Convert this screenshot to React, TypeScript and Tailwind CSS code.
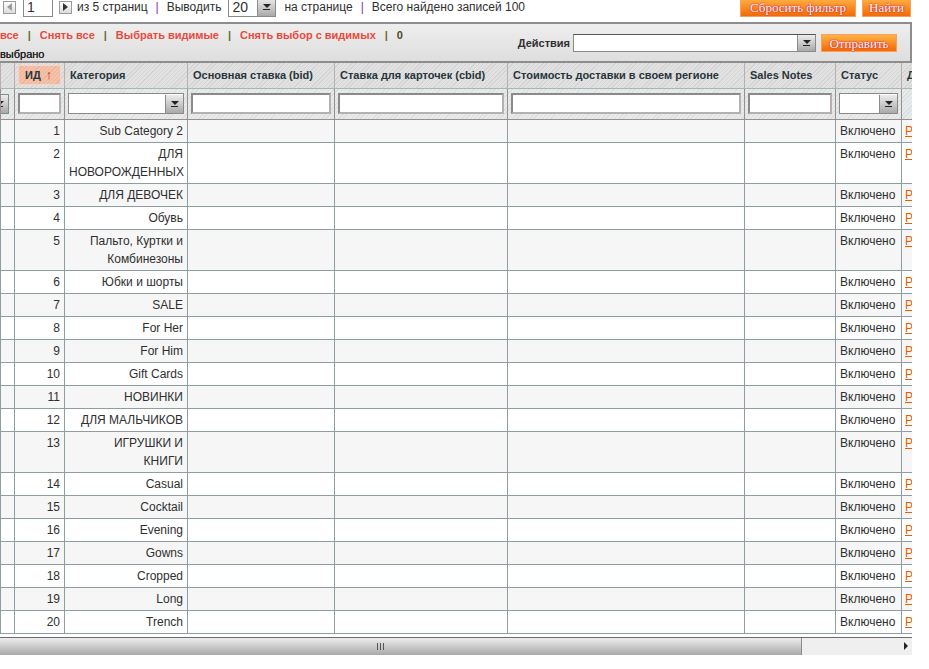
import React from "react";

const rows: [number, React.ReactNode, boolean][] = [
  [1, "Sub Category 2", false],
  [2, <>ДЛЯ<br />НОВОРОЖДЕННЫХ</>, true],
  [3, "ДЛЯ ДЕВОЧЕК", false],
  [4, "Обувь", false],
  [5, <>Пальто, Куртки и<br />Комбинезоны</>, true],
  [6, "Юбки и шорты", false],
  [7, "SALE", false],
  [8, "For Her", false],
  [9, "For Him", false],
  [10, "Gift Cards", false],
  [11, "НОВИНКИ", false],
  [12, "ДЛЯ МАЛЬЧИКОВ", false],
  [13, <>ИГРУШКИ И<br />КНИГИ</>, true],
  [14, "Casual", false],
  [15, "Cocktail", false],
  [16, "Evening", false],
  [17, "Gowns", false],
  [18, "Cropped", false],
  [19, "Long", false],
  [20, "Trench", false],
];

const cols = [14, 50, 123, 147, 173, 237, 91, 66, 12];

function Arrow({ h = "h-[18px]" }: { h?: string }) {
  return (
    <span className={`flex ${h} w-[18px] shrink-0 items-center justify-center border-l border-[#8c8c8c] bg-[linear-gradient(#ececec,#a9a9a9)]`}>
      <span className="flex flex-col items-center gap-[1px]">
        <span className="h-0 w-0 border-x-[4px] border-t-[4px] border-x-transparent border-t-[#222]" />
        <span className="h-[1px] w-[7px] bg-[#222]" />
      </span>
    </span>
  );
}

function OrangeButton({ children, w, h = "h-[18px]" }: { children: React.ReactNode; w: string; h?: string }) {
  return (
    <span className={`flex ${h} ${w} items-center justify-center border border-[#f5a060] bg-[linear-gradient(#ffb347,#f26a06)] font-['Liberation_Serif',serif] text-[13px] leading-none text-white [text-shadow:0_0_2px_#d0123a,0_0_1px_#d0123a]`}>
      {children}
    </span>
  );
}

function PagerBox({ dir }: { dir: "l" | "r" }) {
  return (
    <span className="flex h-[13px] w-[13px] items-center justify-center border border-[#9a9a9a] bg-[linear-gradient(#ffffff,#dcdcdc)]">
      {dir === "l" ? (
        <span className="h-0 w-0 border-y-[4px] border-r-[5px] border-y-transparent border-r-[#9c9c9c]" />
      ) : (
        <span className="h-0 w-0 border-y-[4px] border-l-[5px] border-y-transparent border-l-[#333]" />
      )}
    </span>
  );
}

const headers = [
  "",
  "ИД",
  "Категория",
  "Основная ставка (bid)",
  "Ставка для карточек (cbid)",
  "Стоимость доставки в своем регионе",
  "Sales Notes",
  "Статус",
  "Действие",
];

export default function App() {
  return (
    <div className="h-[669px] w-[929px] overflow-hidden bg-white font-['Liberation_Sans',Arial,sans-serif] text-[#2f2f2f]">
      {/* pager (top is scrolled out of view) */}
      <div className="h-[22px] w-[912px] overflow-hidden">
        <div className="-mt-[3px] flex items-start">
          <div className="flex h-[20px] items-center pl-[3px] text-[12px]">
            <PagerBox dir="l" />
            <span className="ml-[7px] flex h-[20px] w-[30px] items-center border border-[#8a8a8a] border-t-[#555] bg-white pl-[3px] text-[14px]">1</span>
            <span className="ml-[6px]"><PagerBox dir="r" /></span>
            <span className="ml-[5px]">из 5 страниц</span>
            <span className="mx-[8px] text-[#7a3c8c]">|</span>
            <span>Выводить</span>
            <span className="ml-[7px] flex h-[20px] w-[48px] items-center border border-[#8a8a8a] border-t-[#555] bg-white text-[14px]">
              <span className="flex-1 pl-[3px]">20</span>
              <Arrow h="h-[18px]" />
            </span>
            <span className="ml-[8px]">на странице</span>
            <span className="mx-[8px] text-[#7a3c8c]">|</span>
            <span>Всего найдено записей 100</span>
          </div>
          <div className="ml-auto flex gap-[6px] pr-[1px]">
            <OrangeButton w="w-[116px]" h="h-[20px]">Сбросить фильтр</OrangeButton>
            <OrangeButton w="w-[49px]" h="h-[20px]">Найти</OrangeButton>
          </div>
        </div>
      </div>

      {/* massaction */}
      <div className="flex h-[41px] w-[912px] border-y-2 border-r-2 border-y-[#8d8d8d] border-r-[#8d8d8d] bg-[linear-gradient(#eeeeee,#dedede)]">
        <div className="flex flex-col pt-[3px] text-[11px] font-bold">
          <div className="flex items-center">
            <span className="text-[#e84a3c]">все</span>
            <span className="mx-[9px] text-[#6a6a2a]">|</span>
            <span className="text-[#e84a3c]">Снять все</span>
            <span className="mx-[9px] text-[#6a6a2a]">|</span>
            <span className="text-[#e84a3c]">Выбрать видимые</span>
            <span className="mx-[9px] text-[#6a6a2a]">|</span>
            <span className="text-[#e84a3c]">Снять выбор с видимых</span>
            <span className="mx-[9px] text-[#6a6a2a]">|</span>
            <span className="text-[#4a4a1a]">0</span>
          </div>
          <span className="mt-[2px] text-[11px] font-normal text-[#222] [text-shadow:0_0_0.4px_#222]">выбрано</span>
        </div>
        <div className="ml-auto flex items-center pr-[13px] pt-[1px]">
          <span className="mr-[3px] text-[11px] font-bold">Действия</span>
          <span className="flex h-[18px] w-[243px] items-center border border-[#8a8a8a] border-t-[#555] bg-white">
            <span className="flex-1" />
            <Arrow h="h-[16px]" />
          </span>
          <span className="ml-[5px]">
            <OrangeButton w="w-[76px]">Отправить</OrangeButton>
          </span>
        </div>
      </div>

      {/* grid */}
      <div className="w-[912px] overflow-hidden">
        <table className="w-[913px] table-fixed border-collapse text-[12px] leading-[18px]">
          <colgroup>
            {cols.map((w, i) => (
              <col key={i} style={{ width: w }} />
            ))}
          </colgroup>
          <thead>
            <tr className="h-[25px] bg-[image:repeating-linear-gradient(135deg,#e2e2e2_0px,#e2e2e2_2px,#d4d4d4_2px,#d4d4d4_3px)]">
              {headers.map((h, i) => (
                <th key={i} className="overflow-hidden whitespace-nowrap border-x border-[#b8b0b0] p-0 text-left text-[11px] font-bold text-[#27343a]">
                  {i === 1 ? (
                    <span className="mx-[3px] flex h-[20px] items-center border border-[#f7d4c4] bg-[image:repeating-linear-gradient(135deg,#f5c1a9_0px,#f5c1a9_2px,#eab39a_2px,#eab39a_3px)] pl-[6px]">
                      ИД <span className="ml-[5px] text-[13px] font-normal text-[#e8000f]">↑</span>
                    </span>
                  ) : (
                    <span className="pl-[5px]">{h}</span>
                  )}
                </th>
              ))}
            </tr>
            <tr className="h-[31px] bg-[image:repeating-linear-gradient(135deg,#e6ebeb_0px,#e6ebeb_2px,#d9e0e0_2px,#d9e0e0_3px)]">
              {cols.map((_, i) => (
                <th key={i} className="overflow-hidden border border-[#9e8c8c] border-t-[#a9b4b4] p-0 font-normal">
                  {i === 0 && (
                    <div className="flex justify-end pr-[5px]">
                      <span className="flex h-[20px] w-[9px] items-center justify-end overflow-hidden border-y border-r border-[#8a8a8a]">
                        <Arrow />
                      </span>
                    </div>
                  )}
                  {(i === 1 || i === 3 || i === 4 || i === 5 || i === 6) && (
                    <div className="px-[3px]">
                      <div className="h-[21px] border-2 border-[#8f8888] border-b-[#b8b0b0] border-r-[#b8b0b0] bg-white" />
                    </div>
                  )}
                  {(i === 2 || i === 7) && (
                    <div className="px-[3px]">
                      <div className="flex h-[21px] items-center border border-[#8f8888] bg-white">
                        <span className="flex-1" />
                        <Arrow />
                      </div>
                    </div>
                  )}
                </th>
              ))}
            </tr>
          </thead>
          <tbody>
            {rows.map(([id, name, tall]) => (
              <tr key={id} className={id % 2 === 1 ? "bg-[#f6f6f6]" : "bg-white"}>
                <td className={`border border-[#8e9d9f] px-[4px] py-[2px] align-top ${tall ? "h-[41px]" : "h-[23px]"}`} />
                <td className="border border-[#8e9d9f] px-[4px] py-[2px] text-right align-top">{id}</td>
                <td className="border border-[#8e9d9f] px-[4px] py-[2px] text-right align-top">{name}</td>
                <td className="border border-[#8e9d9f]" />
                <td className="border border-[#8e9d9f]" />
                <td className="border border-[#8e9d9f]" />
                <td className="border border-[#8e9d9f]" />
                <td className="border border-[#8e9d9f] px-[4px] py-[2px] align-top">Включено</td>
                <td className="overflow-hidden whitespace-nowrap border border-[#8e9d9f] px-[3px] py-[2px] align-top">
                  <span className="text-[#eb5e00] underline">Редактировать</span>
                </td>
              </tr>
            ))}
          </tbody>
        </table>
      </div>

      {/* horizontal scrollbar */}
      <div className="mt-[3px] flex h-[18px] w-[912px] border-t border-[#6c6c6c]">
        <div className="flex w-[802px] items-center justify-center border-r border-[#8a8a8a] bg-[linear-gradient(#ededed,#c4c4c4_60%,#a9a9a9)] pr-[40px]">
          <span className="flex gap-[2px]">
            <span className="h-[7px] w-[1px] bg-[#555]" />
            <span className="h-[7px] w-[1px] bg-[#555]" />
            <span className="h-[7px] w-[1px] bg-[#555]" />
          </span>
        </div>
        <div className="flex flex-1 items-center justify-end bg-[#efefef] pr-[4px]">
          <span className="h-0 w-0 border-y-[4px] border-l-[4px] border-y-transparent border-l-[#222]" />
        </div>
      </div>
    </div>
  );
}
